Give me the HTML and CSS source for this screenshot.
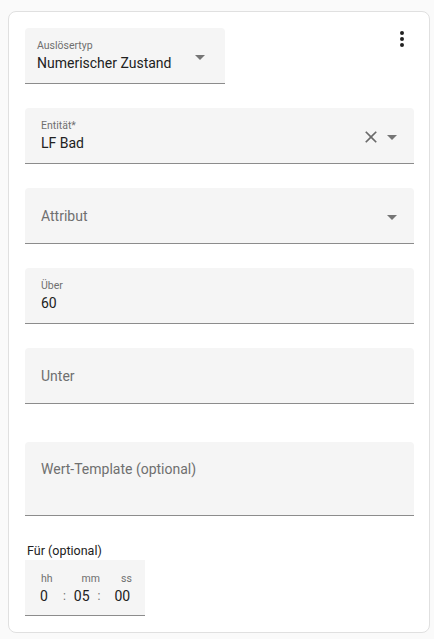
FILE: index.html
```html
<!DOCTYPE html>
<html lang="de">
<head>
  <meta charset="UTF-8">
  <meta name="viewport" content="width=device-width, initial-scale=1.0">
  <title>Auslöser</title>
  <link rel="stylesheet" href="styles.css">
</head>
<body>
  <div class="card">
    <div class="card-top">
      <div class="field field-type">
        <div class="field-text">
          <span class="field-label">Auslösertyp</span>
          <span class="field-value">Numerischer Zustand</span>
        </div>
        <svg class="arrow" viewBox="0 0 10 5"><path d="M0 0l5 5 5-5z"/></svg>
      </div>
      <button class="menu-button">
        <svg viewBox="0 0 24 24"><path d="M12 16a2 2 0 0 1 2 2 2 2 0 0 1-2 2 2 2 0 0 1-2-2 2 2 0 0 1 2-2m0-6a2 2 0 0 1 2 2 2 2 0 0 1-2 2 2 2 0 0 1-2-2 2 2 0 0 1 2-2m0-6a2 2 0 0 1 2 2 2 2 0 0 1-2 2 2 2 0 0 1-2-2 2 2 0 0 1 2-2z"/></svg>
      </button>
    </div>

    <div class="field field-wide">
      <div class="field-text">
        <span class="field-label">Entität*</span>
        <span class="field-value">LF Bad</span>
      </div>
      <svg class="clear" viewBox="0 0 24 24"><path d="M19 6.41 17.59 5 12 10.59 6.41 5 5 6.41 10.59 12 5 17.59 6.41 19 12 13.41 17.59 19 19 17.59 13.41 12z"/></svg>
      <svg class="arrow" viewBox="0 0 10 5"><path d="M0 0l5 5 5-5z"/></svg>
    </div>

    <div class="field field-wide">
      <div class="field-text">
        <span class="field-placeholder">Attribut</span>
      </div>
      <svg class="arrow" viewBox="0 0 10 5"><path d="M0 0l5 5 5-5z"/></svg>
    </div>

    <div class="field field-wide">
      <div class="field-text">
        <span class="field-label">Über</span>
        <span class="field-value">60</span>
      </div>
    </div>

    <div class="field field-wide">
      <div class="field-text">
        <span class="field-placeholder">Unter</span>
      </div>
    </div>

    <div class="field field-area">
      <span class="field-placeholder">Wert-Template (optional)</span>
    </div>

    <div class="duration">
      <div class="duration-title">Für (optional)</div>
      <div class="time-box">
        <div class="time-labels">
          <span class="time-label">hh</span>
          <span class="time-label label-mm">mm</span>
          <span class="time-label label-ss">ss</span>
        </div>
        <div class="time-values">
          <span class="time-value">0</span>
          <span class="time-sep">:</span>
          <span class="time-value value-mm">05</span>
          <span class="time-sep sep-ss">:</span>
          <span class="time-value value-ss">00</span>
        </div>
      </div>
    </div>
  </div>
</body>
</html>
```

FILE: styles.css
```css
body {
  margin: 0;
  padding: 11px 4px 0 8px;
  font-family: Roboto, "Noto Sans", sans-serif;
  background-color: #fafafa;
  color: #212121;
}

.card {
  box-sizing: border-box;
  width: 422px;
  padding: 16px 15px 16px 16px;
  background-color: #fff;
  border: 1px solid #e0e0e0;
  border-radius: 8px;
  display: flex;
  flex-direction: column;
}

.card-top {
  display: flex;
  justify-content: space-between;
  align-items: flex-start;
}

.menu-button {
  border: none;
  background: transparent;
  padding: 0;
  width: 24px;
  height: 24px;
  margin-top: -1px;
}

.menu-button svg {
  width: 24px;
  height: 24px;
  fill: #212121;
}

.field {
  box-sizing: border-box;
  flex-shrink: 0;
  display: flex;
  align-items: center;
  height: 56px;
  background-color: #f5f5f5;
  border-bottom: 1px solid #8c8c8c;
  border-radius: 4px 4px 0 0;
  padding: 0 17px 0 16px;
}

.field-type {
  width: 200px;
  padding-left: 12px;
  padding-right: 20px;
}

.field-wide {
  margin-top: 24px;
}

.field-text {
  flex: 1;
  display: flex;
  flex-direction: column;
}

.field-label {
  font-size: 10.5px;
  line-height: 14px;
  color: #6f6f6f;
  margin-top: 1px;
}

.field-value {
  font-size: 14px;
  line-height: 20px;
}

.field-placeholder {
  font-size: 14px;
  line-height: 20px;
  color: #6f6f6f;
}

.arrow {
  width: 10px;
  height: 5px;
  fill: #757575;
  margin-top: 3px;
}

.clear {
  width: 20px;
  height: 20px;
  fill: #6a6a6a;
  margin-right: 6px;
  margin-top: 3px;
}

.field-area {
  margin-top: 38px;
  height: 74px;
  align-items: flex-start;
  padding-top: 17px;
}

.duration {
  margin-top: 26px;
}

.duration-title {
  font-size: 12.5px;
  line-height: 18px;
  padding-left: 2px;
}

.time-box {
  box-sizing: border-box;
  width: 120px;
  height: 56px;
  padding: 12px 0 0 15px;
  background-color: #f5f5f5;
  border-bottom: 1px solid #8c8c8c;
}

.time-labels {
  display: flex;
  padding-left: 1px;
}

.time-label {
  font-size: 10.5px;
  line-height: 14px;
  color: #6f6f6f;
}

.label-mm {
  margin-left: 29px;
}

.label-ss {
  margin-left: 21px;
}

.time-values {
  display: flex;
}

.time-value {
  font-size: 14px;
  line-height: 20px;
}

.time-sep {
  font-size: 12px;
  line-height: 20px;
  color: #6f6f6f;
  margin-left: 15px;
}

.value-mm {
  margin-left: 8px;
}

.sep-ss {
  margin-left: 8px;
}

.value-ss {
  margin-left: 14px;
}
```
